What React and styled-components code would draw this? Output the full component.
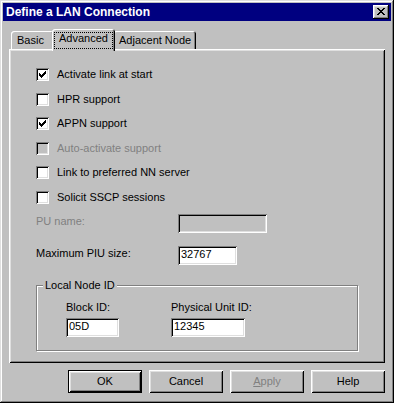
import React from 'react';
import styled, { createGlobalStyle } from 'styled-components';

const Global = createGlobalStyle`
  html, body { margin: 0; padding: 0; background: #c0c0c0; }
  body { font-family: "Liberation Sans", Arial, sans-serif; font-size: 11px; }
  * { box-sizing: border-box; }
`;

const Window = styled.div`
  width: 394px;
  height: 403px;
  padding: 3px;
  background: #c0c0c0;
  color: #000;
  font: 11px "Liberation Sans", Arial, sans-serif;
  box-shadow: inset -1px -1px #000, inset 1px 1px #dfdfdf, inset -2px -2px #808080, inset 2px 2px #fff;
  display: flex;
  flex-direction: column;
`;

const TitleBar = styled.div`
  height: 18px;
  background: #000080;
  color: #fff;
  display: flex;
  align-items: center;
  justify-content: space-between;
  padding: 0 2px 0 3px;
`;

const TitleText = styled.span`
  font-weight: bold;
  font-size: 12px;
  line-height: 14px;
  white-space: nowrap;
`;

const CloseButton = styled.div`
  width: 16px;
  height: 14px;
  background: #c0c0c0;
  box-shadow: inset -1px -1px #000, inset 1px 1px #fff, inset -2px -2px #808080, inset 2px 2px #dfdfdf;
  display: flex;
  align-items: center;
  justify-content: center;
  padding-bottom: 1px;
  svg { display: block; }
`;

const Content = styled.div`
  padding: 8px 6px 0;
  display: flex;
  flex-direction: column;
`;

const TabRow = styled.div`
  display: flex;
  align-items: flex-end;
  height: 20px;
  padding-left: 2px;
  position: relative;
  z-index: 1;
`;

const Tab = styled.div`
  position: relative;
  width: ${p => p.$w}px;
  height: ${p => (p.$active ? 22 : 18)}px;
  margin: 0 ${p => (p.$active ? -2 : 0)}px ${p => (p.$active ? -2 : 0)}px;
  z-index: ${p => (p.$active ? 2 : 1)};
  background: #c0c0c0;
  border-radius: 3px 3px 0 0;
  box-shadow: inset 1px 1px #fff, inset -1px 0 #000, inset -2px 0 #808080;
  padding: ${p => (p.$active ? '0' : '3px 0 0 6px')};
  line-height: 13px;
  white-space: nowrap;
`;

const FocusRing = styled.span`
  display: block;
  margin: 3px 2px 0;
  height: 17px;
  border: 1px dotted #000;
  padding-left: 4px;
  line-height: 10px;
`;

const Panel = styled.div`
  height: 314px;
  background: #c0c0c0;
  box-shadow: inset 1px 1px #fff, inset -1px -1px #000, inset 2px 2px #dfdfdf, inset -2px -2px #808080;
  padding: 19px 0 0 27px;
  display: flex;
  flex-direction: column;
`;

const CheckList = styled.div`
  display: flex;
  flex-direction: column;
  gap: 11.6px;
`;

const CheckRow = styled.div`
  display: flex;
  align-items: center;
  gap: 8px;
  height: 13px;
  line-height: 13px;
  color: ${p => (p.$disabled ? '#808080' : '#000')};
  white-space: nowrap;
`;

const Box = styled.div`
  width: 13px;
  height: 13px;
  flex: none;
  background: ${p => (p.$disabled ? '#c0c0c0' : '#fff')};
  box-shadow: inset 1px 1px #808080, inset -1px -1px #fff, inset 2px 2px #000, inset -2px -2px #dfdfdf;
  display: flex;
  align-items: center;
  justify-content: center;
  svg { display: block; }
`;

const FieldRow = styled.div`
  display: flex;
  align-items: flex-start;
  margin-top: ${p => p.$mt}px;
`;

const FieldLabel = styled.span`
  width: ${p => p.$w}px;
  flex: none;
  margin-top: 1px;
  line-height: 13px;
  color: ${p => (p.$disabled ? '#808080' : '#000')};
  white-space: nowrap;
`;

const Field = styled.div`
  width: ${p => p.$w}px;
  height: 19px;
  flex: none;
  background: ${p => (p.$disabled ? '#c0c0c0' : '#fff')};
  box-shadow: inset 1px 1px #808080, inset -1px -1px #fff, inset 2px 2px #000, inset -2px -2px #dfdfdf;
  padding: 0 3px 0 3px;
  line-height: 16px;
  white-space: nowrap;
`;

const Group = styled.div`
  position: relative;
  margin-top: 20px;
  width: 322px;
  height: 66px;
  border: 1px solid #808080;
  box-shadow: inset 1px 1px #fff, 1px 1px #fff;
  padding: 15px 0 0 29px;
  display: flex;
`;

const Legend = styled.span`
  position: absolute;
  top: -7px;
  left: 6px;
  padding: 0 2px;
  background: #c0c0c0;
  line-height: 13px;
  white-space: nowrap;
`;

const GroupCol = styled.div`
  width: ${p => p.$w}px;
  display: flex;
  flex-direction: column;
  gap: 4px;
  line-height: 13px;
  white-space: nowrap;
`;

const ButtonRow = styled.div`
  margin-top: 7px;
  display: flex;
  justify-content: flex-end;
  gap: 7px;
`;

const Button = styled.div`
  width: 74px;
  height: 23px;
  background: #c0c0c0;
  display: flex;
  align-items: center;
  justify-content: center;
  font-size: 11px;
  color: ${p => (p.$disabled ? '#808080' : '#000')};
  box-shadow: ${p =>
    p.$default
      ? 'inset 0 0 0 1px #000, inset 2px 2px #fff, inset -2px -2px #000, inset 3px 3px #dfdfdf, inset -3px -3px #808080'
      : 'inset 1px 1px #fff, inset -1px -1px #000, inset 2px 2px #dfdfdf, inset -2px -2px #808080'};
  padding-bottom: 1px;
`;

const Check = () => (
  <svg width="7" height="7" viewBox="0 0 7 7" shapeRendering="crispEdges">
    <path
      fill="#000"
      d="M6 0h1v1h-1z M5 1h2v1h-2z M0 2h1v1h-1z M4 2h3v1h-3z M0 3h2v1h-2z M3 3h3v1h-3z M0 4h5v1h-5z M1 5h3v1h-3z M2 6h1v1h-1z"
    />
  </svg>
);

const CloseGlyph = () => (
  <svg width="8" height="7" viewBox="0 0 8 7" shapeRendering="crispEdges">
    <path
      fill="#000"
      d="M0 0h2v1h-2z M6 0h2v1h-2z M1 1h2v1h-2z M5 1h2v1h-2z M2 2h4v1h-4z M3 3h2v1h-2z M2 4h4v1h-4z M1 5h2v1h-2z M5 5h2v1h-2z M0 6h2v1h-2z M6 6h2v1h-2z"
    />
  </svg>
);

const checks = [
  { label: 'Activate link at start', checked: true },
  { label: 'HPR support' },
  { label: 'APPN support', checked: true },
  { label: 'Auto-activate support', disabled: true },
  { label: 'Link to preferred NN server' },
  { label: 'Solicit SSCP sessions' },
];

export default function App() {
  return (
    <>
      <Global />
      <Window>
        <TitleBar>
          <TitleText>Define a LAN Connection</TitleText>
          <CloseButton>
            <CloseGlyph />
          </CloseButton>
        </TitleBar>
        <Content>
          <TabRow>
            <Tab $w={43}>Basic</Tab>
            <Tab $w={63} $active>
              <FocusRing>Advanced</FocusRing>
            </Tab>
            <Tab $w={83}>Adjacent Node</Tab>
          </TabRow>
          <Panel>
            <CheckList>
              {checks.map(c => (
                <CheckRow key={c.label} $disabled={c.disabled}>
                  <Box $disabled={c.disabled}>{c.checked && <Check />}</Box>
                  <span>{c.label}</span>
                </CheckRow>
              ))}
            </CheckList>
            <FieldRow $mt={10}>
              <FieldLabel $w={142} $disabled>PU name:</FieldLabel>
              <Field $w={89} $disabled />
            </FieldRow>
            <FieldRow $mt={13}>
              <FieldLabel $w={142}>Maximum PIU size:</FieldLabel>
              <Field $w={59}>32767</Field>
            </FieldRow>
            <Group>
              <Legend>Local Node ID</Legend>
              <GroupCol $w={105}>
                <span>Block ID:</span>
                <Field $w={53}>05D</Field>
              </GroupCol>
              <GroupCol $w={80}>
                <span>Physical Unit ID:</span>
                <Field $w={74}>12345</Field>
              </GroupCol>
            </Group>
          </Panel>
          <ButtonRow>
            <Button $default>OK</Button>
            <Button>Cancel</Button>
            <Button $disabled>
              <span><u>A</u>pply</span>
            </Button>
            <Button>Help</Button>
          </ButtonRow>
        </Content>
      </Window>
    </>
  );
}
